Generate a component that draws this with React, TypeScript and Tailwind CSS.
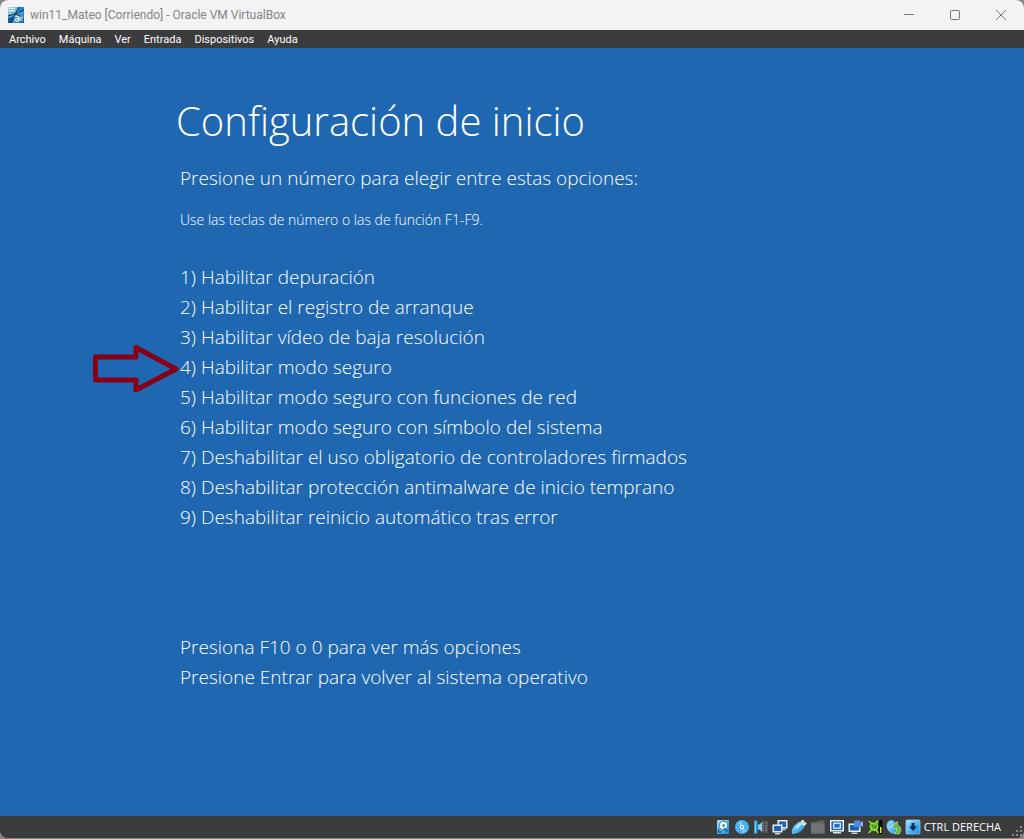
import type { ReactNode } from "react";

const menus = ["Archivo", "Máquina", "Ver", "Entrada", "Dispositivos", "Ayuda"];

const options = [
  "Habilitar depuración",
  "Habilitar el registro de arranque",
  "Habilitar vídeo de baja resolución",
  "Habilitar modo seguro",
  "Habilitar modo seguro con funciones de red",
  "Habilitar modo seguro con símbolo del sistema",
  "Deshabilitar el uso obligatorio de controladores firmados",
  "Deshabilitar protección antimalware de inicio temprano",
  "Deshabilitar reinicio automático tras error",
];

const recommended = 4;

function AppIcon() {
  return (
    <svg viewBox="0 0 16 16" className="size-4 shrink-0" aria-hidden="true">
      <defs>
        <linearGradient id="app" x1="0" y1="0" x2="1" y2="1">
          <stop offset="0" stopColor="#b5dcf0" />
          <stop offset=".5" stopColor="#4ea5dd" />
          <stop offset="1" stopColor="#17629f" />
        </linearGradient>
      </defs>
      <rect width="16" height="16" fill="url(#app)" />
      <path d="M0 11 5 9.5 6 11 4 16H0z" fill="#1b5788" />
      <path d="M11 0h5v4l-4 1.5-3-1z" fill="#2383cf" />
      <path d="M0 9 7 7l9-4M11 0 7 7l-4 9M7 7l5 2 4 4" stroke="#12304a" strokeWidth="1" fill="none" />
      <path d="M1 1h6v3.5H1z" fill="#e4eff5" />
      <path d="M1.5 2.5h2M5 2.5h1.5" stroke="#52788f" strokeWidth=".8" />
      <path d="M7.5 9.5q3-1 3 1v3.500q-3 1-3-1t3-1M12 9.5v4.500M14 9.5v4" stroke="#eaf5fc" strokeWidth="1.1" fill="none" />
    </svg>
  );
}

function StatusIcon({ label, children }: { label: string; children: ReactNode }) {
  return (
    <button type="button" aria-label={label} className="size-4 shrink-0">
      <svg viewBox="0 0 16 16" className="size-4" fill="none">
        {children}
      </svg>
    </button>
  );
}

function StatusIcons() {
  return (
    <div className="flex items-center gap-[3px]">
      <svg width="0" height="0" className="absolute" aria-hidden="true">
        <defs>
          <linearGradient id="blue" x1="0" y1="0" x2="1" y2="1">
            <stop offset="0" stopColor="#a8e4ff" />
            <stop offset=".5" stopColor="#54b8f5" />
            <stop offset="1" stopColor="#168be0" />
          </linearGradient>
        </defs>
      </svg>
      <StatusIcon label="Discos duros">
        <rect x="2" y="1" width="12" height="14" rx="1" fill="url(#blue)" />
        <circle cx="8.5" cy="6.5" r="4.3" fill="#f3fbff" stroke="#156bab" strokeWidth=".8" />
        <circle cx="8.500" cy="6.5" r="1.5" fill="#399bdc" />
        <path d="M3.500 10v3h3M9 9l3.500 3.500" stroke="#0e5596" strokeWidth="1.3" />
      </StatusIcon>
      <StatusIcon label="Unidades ópticas">
        <circle cx="8" cy="8" r="7" fill="#48b2f3" />
        <path d="M3 5a6 6 0 0 1 5-3v4zM13 11a6 6 0 0 1-5 3v-4z" fill="#a2defc" opacity=".5" />
        <circle cx="8" cy="8" r="2.2" fill="#fff" />
        <circle cx="8" cy="8" r=".9" fill="#397ba5" />
      </StatusIcon>
      <StatusIcon label="Audio">
        <path d="M9 2h6v12H9z" fill="#545759" />
        <path d="M9 4h5M9 6.500h5M9 9h5M9 11.500h5" stroke="#828486" />
        <path d="M11.500 2v12" stroke="#454749" />
        <path d="M1 1.500h3.500v13H1z" fill="#3598da" />
        <path d="M2.500 2v12" stroke="#79cbf8" />
        <path d="M5 5.500h1.500L9 3v10l-2.500-2.500H5z" fill="#83d0fa" />
      </StatusIcon>
      <StatusIcon label="Red">
        <rect x="6.2" y="1.7" width="8.6" height="7.1" fill="#1e62b7" stroke="#f4f8fc" strokeWidth="1.4" />
        <path d="M10.5 10.5h3" stroke="#cad2d8" strokeWidth="1.4" />
        <rect x="1.2" y="6.2" width="8.6" height="6.6" fill="#1e62b7" stroke="#f4f8fc" strokeWidth="1.4" />
        <path d="M3 14.7h5" stroke="#cad2d8" strokeWidth="1.4" />
      </StatusIcon>
      <StatusIcon label="USB">
        <path d="M1 15C.5 11 1.500 8.500 4 6l4-3.500L13.500 8 10 12c-2.500 2-5 3-9 3z" fill="url(#blue)" />
        <path d="m5 8 4-4 1.5 1.5-5 5z" fill="#c8efff" />
        <path d="m9 3.5 2.5-2.8 4 4L12.8 7.3z" fill="#f0f5f9" stroke="#adc2d0" strokeWidth=".6" />
        <path d="m11.500 3 1.500 1.500" stroke="#4e6575" />
      </StatusIcon>
      <StatusIcon label="Carpetas compartidas">
        <path d="M1 3h6l1-1.5h6.500v13H1z" fill="#646566" />
        <path d="M1 4.5h13.500v10H1z" fill="#717273" />
      </StatusIcon>
      <StatusIcon label="Pantalla">
        <rect x="1.7" y="1.7" width="12.6" height="10.1" fill="#1763ba" stroke="#f5f9fc" strokeWidth="1.4" />
        <rect x="4.7" y="4.2" width="6.6" height="5" fill="#216fc6" stroke="#f5f9fc" strokeWidth="1.2" />
        <path d="M4 13.8h8" stroke="#dbe6ef" strokeWidth="1.4" />
      </StatusIcon>
      <StatusIcon label="Grabación">
        <rect x="1.2" y="5.2" width="10.6" height="7.1" fill="#1763ba" stroke="#f4f8fc" strokeWidth="1.4" />
        <path d="M3.5 14.3h6" stroke="#cad2d8" strokeWidth="1.4" />
        <path d="M6 1.500h6.500V8H6z" fill="#5486e4" />
        <path d="m12.500 3.500 2.500-1.500v6l-2.500-1.500z" fill="#88adf3" />
      </StatusIcon>
      <StatusIcon label="Procesador">
        <path d="M1 1.500h10.500v13H1z" fill="#294b16" />
        <path d="m3 4 4 .5L11 2v6.500L9 12l-4-.5L2.500 8z" fill="#69bd2a" />
        <path d="M1.500 2 5 4.500l3-.5 3.500-2.500M1.500 14l3-3M11.500 14 9 11M3 7l2 4h4l2-4" stroke="#a3e94b" strokeWidth="1.2" />
        <path d="m5 6 3 3 2-2" stroke="#285a16" />
        <rect x="12" y="1" width="3.500" height="14" fill="#080d05" />
        <path d="M13 8h1.500v6H13z" fill="#d4ed40" />
      </StatusIcon>
      <StatusIcon label="Integración del ratón">
        <ellipse cx="6.500" cy="8" rx="5.500" ry="7" transform="rotate(-28 6.500 8)" fill="url(#blue)" />
        <path d="M5 1.500 7 7 2 9" stroke="#b9e8ff" />
        <path d="m6.500 7.500 5-5v3q6 4.500 1.500 9.500l-4.500-.5q4-3 1.500-6l-1.500 2z" fill="#62b833" stroke="#c2e8a0" strokeWidth=".7" />
      </StatusIcon>
      <StatusIcon label="Captura del teclado">
        <rect x="1" y="1" width="14" height="14" rx="1" fill="url(#blue)" stroke="#a9e0fc" strokeWidth=".6" />
        <path d="M6.500 4h3v3.500H12l-4 4.500-4-4.500h2.500z" fill="#082b52" />
      </StatusIcon>
    </div>
  );
}

function Arrow() {
  return (
    <svg
      viewBox="0 0 88 50"
      className="pointer-events-none absolute -left-[88px] -top-2 h-[50px] w-[88px]"
      fill="none"
      aria-hidden="true"
    >
      <path d="M3.5 13H44V3.500L84 25 44 46V36H3.5z" stroke="#880015" strokeWidth="5" strokeLinejoin="round" />
    </svg>
  );
}

export default function App() {
  return (
    <div className="min-h-screen bg-[#8f8580] font-['Open_Sans',sans-serif]">
      <div className="flex min-h-[calc(100vh-1px)] flex-col overflow-hidden rounded-lg bg-[#3b3c3d]">
        <header className="flex h-[30px] items-center bg-[#f3f3f3] pl-2 text-[#858585]">
          <AppIcon />
          <h1 className="ml-1.5 flex-1 font-['Roboto',sans-serif] text-xs">
            win11_Mateo [Corriendo] - Oracle VM VirtualBox
          </h1>
          <div className="flex h-full text-[#777]">
            <button type="button" aria-label="Minimizar" className="grid h-full w-[46px] place-items-center">
              <svg viewBox="0 0 10 10" className="size-2.5" stroke="currentColor"><path d="M0 4.5h10" /></svg>
            </button>
            <button type="button" aria-label="Maximizar" className="grid h-full w-[46px] place-items-center">
              <svg viewBox="0 0 10 10" className="size-2.5" fill="none" stroke="currentColor"><rect x=".5" y=".5" width="9" height="9" rx="1" /></svg>
            </button>
            <button type="button" aria-label="Cerrar" className="grid h-full w-[46px] place-items-center">
              <svg viewBox="0 0 10 10" className="size-2.5" stroke="currentColor"><path d="m0 0 10 10M10 0 0 10" /></svg>
            </button>
          </div>
        </header>

        <nav className="flex h-[18px] items-center gap-[13px] bg-[#3b3c3d] pl-[9px] pt-0.5 font-['Roboto',sans-serif] text-[11px] text-white">
          {menus.map((menu) => (
            <button key={menu} type="button">{menu}</button>
          ))}
        </nav>

        <main className="flex-1 bg-[#1f67b1] pb-10 pl-[180px] pt-[49px] text-[19px] font-light leading-[30px] text-white">
          <h2 className="-ml-1 text-[40px] leading-[48px]">Configuración de inicio</h2>
          <p className="mt-[18px]">Presione un número para elegir entre estas opciones:</p>
          <p className="mt-[17px] text-sm leading-5">Use las teclas de número o las de función F1-F9.</p>
          <ol className="mt-8">
            {options.map((option, index) => (
              <li key={option} className="relative">
                {index + 1 === recommended && <Arrow />}
                {index + 1}) {option}
              </li>
            ))}
          </ol>
          <div className="mt-[100px]">
            <p>Presiona F10 o 0 para ver más opciones</p>
            <p>Presione Entrar para volver al sistema operativo</p>
          </div>
        </main>

        <footer className="flex h-[22px] items-center justify-end bg-[#3b3c3d] text-white">
          <StatusIcons />
          <span className="ml-[3px] text-[11px]">CTRL DERECHA</span>
          <svg viewBox="0 0 12 12" className="ml-[11px] size-3 self-end" fill="#8b8c8d" aria-hidden="true">
            <path d="M8 0h2v2H8zM4 4h2v2H4zM8 4h2v2H8zM0 8h2v2H0zM4 8h2v2H4zM8 8h2v2H8z" />
          </svg>
        </footer>
      </div>
    </div>
  );
}
